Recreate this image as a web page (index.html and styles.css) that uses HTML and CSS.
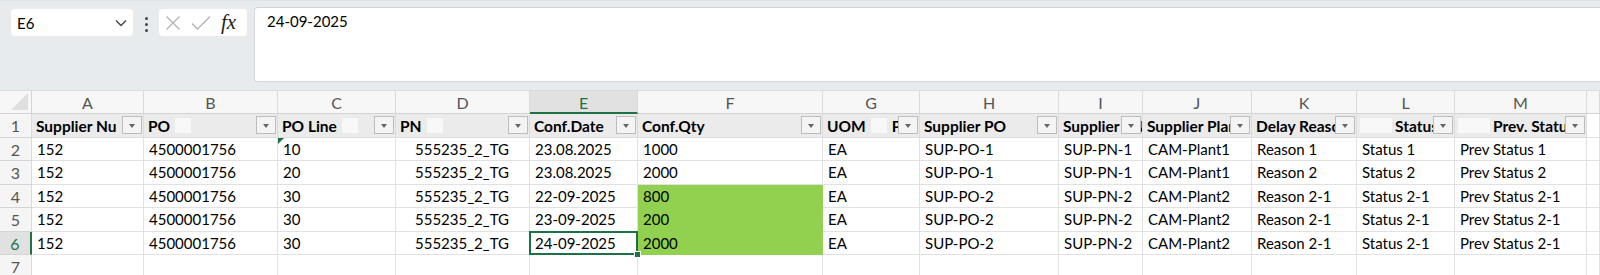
FILE: index.html
```html
<!DOCTYPE html>
<html lang="en">

<head>
    <meta charset="UTF-8">
    <meta name="viewport" content="width=device-width, initial-scale=1.0">
    <title>Confirmaciones - Hoja</title>
    <link rel="stylesheet" href="styles.css">
</head>

<body>
    <div id="topbar">
        <div class="namebox">
            <span>E6</span>
            <svg width="12" height="8" viewBox="0 0 12 8"><polyline points="1,1.5 6,6.5 11,1.5" fill="none" stroke="#444" stroke-width="1.4"/></svg>
        </div>
        <div class="dots"><i></i><i></i><i></i></div>
        <div class="fxbox">
            <svg width="16" height="16" viewBox="0 0 16 16"><path d="M1.5 1.5 L14.5 14.5 M14.5 1.5 L1.5 14.5" stroke="#b3b3b3" stroke-width="1.3" fill="none"/></svg>
            <svg width="20" height="16" viewBox="0 0 20 16"><polyline points="1,8.5 6.5,14 19,1.5" stroke="#b3b3b3" stroke-width="1.3" fill="none"/></svg>
            <span class="fx">fx</span>
        </div>
        <div class="formula">24-09-2025</div>
    </div>

    <div id="sheet">
        <!-- column letters -->
        <div class="corner"></div>
        <div class="colhead">A</div>
        <div class="colhead">B</div>
        <div class="colhead">C</div>
        <div class="colhead">D</div>
        <div class="colhead selected">E</div>
        <div class="colhead">F</div>
        <div class="colhead">G</div>
        <div class="colhead">H</div>
        <div class="colhead">I</div>
        <div class="colhead">J</div>
        <div class="colhead">K</div>
        <div class="colhead">L</div>
        <div class="colhead">M</div>
        <div class="colhead"></div>

        <!-- row 1: table headers -->
        <div class="rowhead">1</div>
        <div class="cell th">Supplier Nu<span class="filter"></span></div>
        <div class="cell th">PO<span class="blank"></span><span class="filter"></span></div>
        <div class="cell th">PO Line<span class="blank"></span><span class="filter"></span></div>
        <div class="cell th">PN<span class="blank"></span><span class="filter"></span></div>
        <div class="cell th">Conf.Date<span class="filter"></span></div>
        <div class="cell th">Conf.Qty<span class="filter"></span></div>
        <div class="cell th">UOM<span class="blank"></span>P<span class="filter"></span></div>
        <div class="cell th">Supplier PO<span class="filter"></span></div>
        <div class="cell th">Supplier PN<span class="filter"></span></div>
        <div class="cell th">Supplier Plant<span class="filter"></span></div>
        <div class="cell th">Delay Reason<span class="filter"></span></div>
        <div class="cell th tight"><span class="blank wide"></span>Status<span class="filter"></span></div>
        <div class="cell th tight"><span class="blank wide"></span>Prev. Status<span class="filter"></span></div>
        <div class="cell"></div>

        <!-- row 2 -->
        <div class="rowhead">2</div>
        <div class="cell">152</div>
        <div class="cell">4500001756</div>
        <div class="cell flag">10</div>
        <div class="cell indent">555235_2_TG</div>
        <div class="cell">23.08.2025</div>
        <div class="cell">1000</div>
        <div class="cell">EA</div>
        <div class="cell">SUP-PO-1</div>
        <div class="cell">SUP-PN-1</div>
        <div class="cell">CAM-Plant1</div>
        <div class="cell">Reason 1</div>
        <div class="cell">Status 1</div>
        <div class="cell">Prev Status 1</div>
        <div class="cell"></div>

        <!-- row 3 -->
        <div class="rowhead">3</div>
        <div class="cell">152</div>
        <div class="cell">4500001756</div>
        <div class="cell">20</div>
        <div class="cell indent">555235_2_TG</div>
        <div class="cell">23.08.2025</div>
        <div class="cell">2000</div>
        <div class="cell">EA</div>
        <div class="cell">SUP-PO-1</div>
        <div class="cell">SUP-PN-1</div>
        <div class="cell">CAM-Plant1</div>
        <div class="cell">Reason 2</div>
        <div class="cell">Status 2</div>
        <div class="cell">Prev Status 2</div>
        <div class="cell"></div>

        <!-- row 4 -->
        <div class="rowhead">4</div>
        <div class="cell">152</div>
        <div class="cell">4500001756</div>
        <div class="cell">30</div>
        <div class="cell indent">555235_2_TG</div>
        <div class="cell">22-09-2025</div>
        <div class="cell green">800</div>
        <div class="cell">EA</div>
        <div class="cell">SUP-PO-2</div>
        <div class="cell">SUP-PN-2</div>
        <div class="cell">CAM-Plant2</div>
        <div class="cell">Reason 2-1</div>
        <div class="cell">Status 2-1</div>
        <div class="cell">Prev Status 2-1</div>
        <div class="cell"></div>

        <!-- row 5 -->
        <div class="rowhead">5</div>
        <div class="cell">152</div>
        <div class="cell">4500001756</div>
        <div class="cell">30</div>
        <div class="cell indent">555235_2_TG</div>
        <div class="cell">23-09-2025</div>
        <div class="cell green">200</div>
        <div class="cell">EA</div>
        <div class="cell">SUP-PO-2</div>
        <div class="cell">SUP-PN-2</div>
        <div class="cell">CAM-Plant2</div>
        <div class="cell">Reason 2-1</div>
        <div class="cell">Status 2-1</div>
        <div class="cell">Prev Status 2-1</div>
        <div class="cell"></div>

        <!-- row 6 (active) -->
        <div class="rowhead selected">6</div>
        <div class="cell">152</div>
        <div class="cell">4500001756</div>
        <div class="cell">30</div>
        <div class="cell indent">555235_2_TG</div>
        <div class="cell active">24-09-2025</div>
        <div class="cell green">2000</div>
        <div class="cell">EA</div>
        <div class="cell">SUP-PO-2</div>
        <div class="cell">SUP-PN-2</div>
        <div class="cell">CAM-Plant2</div>
        <div class="cell">Reason 2-1</div>
        <div class="cell">Status 2-1</div>
        <div class="cell">Prev Status 2-1</div>
        <div class="cell"></div>

        <!-- row 7 -->
        <div class="rowhead">7</div>
        <div class="cell"></div>
        <div class="cell"></div>
        <div class="cell"></div>
        <div class="cell"></div>
        <div class="cell"></div>
        <div class="cell"></div>
        <div class="cell"></div>
        <div class="cell"></div>
        <div class="cell"></div>
        <div class="cell"></div>
        <div class="cell"></div>
        <div class="cell"></div>
        <div class="cell"></div>
        <div class="cell"></div>
    </div>
</body>

</html>
```

FILE: styles.css
```css
body {
    margin: 0;
    width: 1600px;
    height: 275px;
    overflow: hidden;
    font-family: "Lato", "Open Sans", sans-serif;
    font-size: 15px;
    color: #000;
    background: #fff;
}

#topbar {
    display: flex;
    align-items: flex-start;
    height: 91px;
    box-sizing: border-box;
    padding: 8px 0 0 11px;
    background: #e8ebee;
    border-top: 1px solid #dfe2e6;
    border-bottom: 1px solid #d9dcdf;
}

.namebox {
    width: 122px;
    height: 27px;
    box-sizing: border-box;
    padding: 0 6px 0 6px;
    display: flex;
    align-items: center;
    justify-content: space-between;
    background: #fff;
    border-radius: 4px;
}

.dots {
    display: flex;
    flex-direction: column;
    gap: 3px;
    margin: 8px 11px 0 12px;
}

.dots i {
    width: 3px;
    height: 3px;
    border-radius: 50%;
    background: #444;
}

.fxbox {
    width: 88px;
    height: 27px;
    box-sizing: border-box;
    display: flex;
    align-items: center;
    gap: 10px;
    padding-left: 6px;
    background: #fff;
    border-radius: 4px;
}

.fx {
    font-family: "Liberation Serif", serif;
    font-style: italic;
    font-size: 21px;
    line-height: 21px;
    color: #222;
    margin-left: 0;
}

.formula {
    flex: 1;
    height: 75px;
    margin: -2px 0 0 7px;
    box-sizing: border-box;
    padding: 3px 12px;
    line-height: 20px;
    background: #fff;
    border: 1px solid #d3d6da;
    border-right: none;
    border-radius: 4px 0 0 4px;
}

#sheet {
    display: grid;
    grid-template-columns: 32px 112px 134px 118px 134px 108px 185px 97px 139px 84px 109px 105px 98px 132px 1fr;
    grid-template-rows: 23px 24px 23px 24px 23px 24px 23px 24px;
}

.corner {
    position: relative;
    background: #f7f7f7;
    border-right: 1px solid #d4d4d4;
    border-bottom: 1px solid #d4d4d4;
}

.corner::after {
    content: "";
    position: absolute;
    right: 3px;
    bottom: 3px;
    border-left: 17px solid transparent;
    border-bottom: 17px solid #dfdfdf;
}

.colhead,
.rowhead {
    box-sizing: border-box;
    background: #f7f7f7;
    color: #555;
    font-size: 16px;
    text-align: center;
    border-right: 1px solid #dadada;
    border-bottom: 1px solid #d4d4d4;
}

.colhead {
    line-height: 23px;
}

.rowhead {
    line-height: 23px;
    background: #f5f5f5;
}

.colhead.selected {
    background: #e1e1e1;
    color: #1e7145;
    border-bottom: 2px solid #1e7145;
}

.rowhead.selected {
    background: #e1e1e1;
    color: #1e7145;
    border-right: 2px solid #1e7145;
}

.cell {
    position: relative;
    box-sizing: border-box;
    padding: 0 4px 0 5px;
    line-height: 22px;
    white-space: nowrap;
    overflow: hidden;
    border-right: 1px solid #e1e1e1;
    border-bottom: 1px solid #e1e1e1;
}

.cell.th {
    display: flex;
    align-items: center;
    gap: 5px;
    padding-left: 4px;
    font-weight: bold;
    font-size: 15.5px;
    background: #ebebeb;
    border-color: #dcdcdc;
}

.cell.th.tight {
    gap: 3px;
    padding-left: 3px;
}

.blank {
    flex: none;
    width: 16px;
    height: 15px;
    background: #f8f8f8;
}

.blank.wide {
    width: 32px;
}

.filter {
    position: absolute;
    right: 1px;
    top: 2px;
    width: 20px;
    height: 18px;
    box-sizing: border-box;
    background: #f4f4f4;
    border: 1px solid #bdbdbd;
}

.filter::after {
    content: "";
    position: absolute;
    left: 6px;
    top: 7px;
    border-left: 3.5px solid transparent;
    border-right: 3.5px solid transparent;
    border-top: 4px solid #666;
}

.cell.indent {
    padding-left: 19px;
}

.cell.flag::before {
    content: "";
    position: absolute;
    left: 0;
    top: 0;
    border-top: 6px solid #1e7145;
    border-right: 6px solid transparent;
}

.cell.green {
    background: #92d050;
    border-color: #92d050;
}

.cell.active {
    overflow: visible;
    z-index: 1;
}

.cell.active::after {
    content: "";
    position: absolute;
    left: -1px;
    top: -1px;
    right: -1px;
    bottom: -1px;
    border: 2px solid #1e7145;
}

.cell.active::before {
    content: "";
    position: absolute;
    right: -4px;
    bottom: -4px;
    width: 5px;
    height: 5px;
    background: #1e7145;
    border: 1px solid #fff;
    z-index: 2;
}
```
